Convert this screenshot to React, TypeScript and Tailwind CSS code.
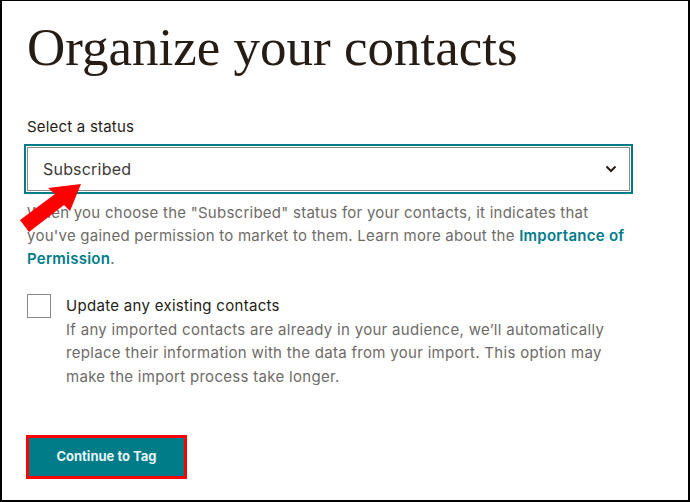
import React from 'react';

export default function App() {
  return (
    <div className="relative w-[690px] h-[502px] overflow-hidden bg-white border-l-2 border-t border-r-2 border-b-2 border-black font-['Inter',sans-serif]">
      <div className="pl-[25px] pr-[56px]">
        <h1 className="mt-[18px] text-[53px] leading-[56px] text-[#241c15] font-['Liberation_Serif',serif]">
          Organize your contacts
        </h1>

        <label className="block mt-[42px] text-[15px] leading-[20px] tracking-[0.2px] text-[#241c15]">Select a status</label>

        <div className="mt-[7px] ml-[-3px] w-[609px] h-[50px] border-2 border-[#007c89] p-px">
          <div className="h-full flex items-center justify-between border border-[#8a8a8a] pl-[15px] pr-[12px]">
            <span className="text-[16px] tracking-[0.2px] text-[#3d3a37]">Subscribed</span>
            <svg width="12" height="8" viewBox="0 0 12 8" fill="none">
              <path d="M1.5 1.5L6 6L10.5 1.5" stroke="#241c15" strokeWidth="2" />
            </svg>
          </div>
        </div>

        <p className="mt-[7px] text-[15px] leading-[23px] tracking-[0.25px] text-[#6e6b68]">
          When you choose the "Subscribed" status for your contacts, it indicates that you've gained permission to market to them. Learn more about the{' '}
          <a className="font-semibold text-[#007c89]">Importance of Permission</a>.
        </p>

        <div className="mt-[24px] flex gap-[15px]">
          <div className="w-[24px] h-[24px] shrink-0 border border-[#8a8a8a] bg-white" />
          <div className="text-[15px] leading-[23.5px] tracking-[0.3px]">
            <div className="text-[#241c15]">Update any existing contacts</div>
            <div className="text-[#6e6b68]">
              If any imported contacts are already in your audience, we’ll automatically replace their information with the data from your import. This option may make the import process take longer.
            </div>
          </div>
        </div>

        <button className="mt-[47px] -ml-px w-[161px] h-[44px] border-[3px] border-[#ff0000] bg-[#007c89] text-[13px] font-bold text-[#e6f3f4]">
          Continue to Tag
        </button>
      </div>

      <svg className="absolute left-0 top-0" width="120" height="260" viewBox="0 0 120 260">
        <polygon
          points="79,183 68,210 62,204 27,231 18,219 53,193 46,187"
          fill="#ff0000"
        />
      </svg>
    </div>
  );
}
